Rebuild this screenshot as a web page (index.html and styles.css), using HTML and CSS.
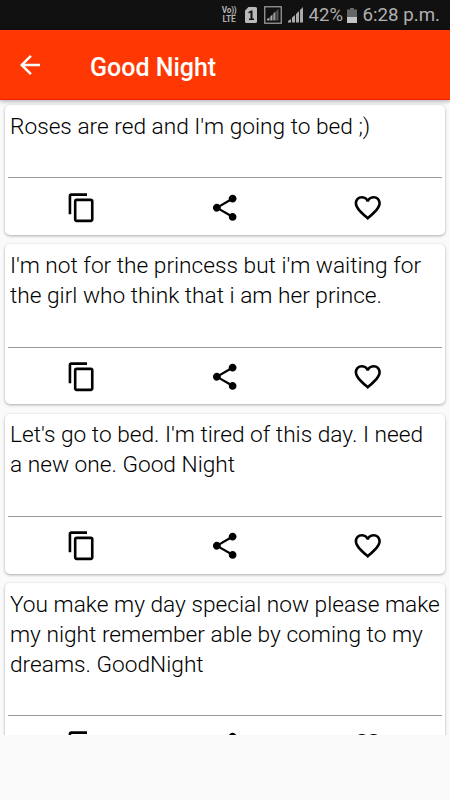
FILE: index.html
```
<!DOCTYPE html>
<html lang="en">
<head>
<meta charset="utf-8">
<title>Good Night</title>
<link rel="stylesheet" href="styles.css">
</head>
<body>
<svg class="defs" aria-hidden="true">
  <symbol id="copy" viewBox="0 0 24 24"><path d="M16 1H4c-1.1 0-2 .9-2 2v14h2V3h12V1zm3 4H8c-1.1 0-2 .9-2 2v14c0 1.1.9 2 2 2h11c1.1 0 2-.9 2-2V7c0-1.100-.9-2-2-2zm0 16H8V7h11v14z"/></symbol>
  <symbol id="share" viewBox="0 0 24 24"><path d="M18 16.080c-.76 0-1.440.3-1.960.77L8.910 12.700c.05-.23.09-.46.09-.7s-.04-.47-.09-.7l7.050-4.110c.54.5 1.250.81 2.040.81 1.660 0 3-1.340 3-3s-1.340-3-3-3-3 1.340-3 3c0 .24.04.47.09.7L8.040 9.810C7.500 9.310 6.790 9 6 9c-1.660 0-3 1.340-3 3s1.340 3 3 3c.79 0 1.500-.31 2.040-.81l7.120 4.160c-.05.21-.08.43-.08.65 0 1.610 1.310 2.920 2.920 2.920s2.920-1.310 2.920-2.920-1.310-2.920-2.920-2.920z"/></symbol>
  <symbol id="heart" viewBox="0 0 24 24"><path d="M16.500 3c-1.740 0-3.410.81-4.500 2.090C10.910 3.810 9.240 3 7.500 3 4.420 3 2 5.420 2 8.500c0 3.780 3.400 6.860 8.550 11.540L12 21.350l1.450-1.320C18.600 15.360 22 12.280 22 8.500 22 5.420 19.580 3 16.500 3zm-4.400 15.550l-.1.100-.1-.1C7.140 14.240 4 11.390 4 8.500 4 6.500 5.500 5 7.500 5c1.540 0 3.040.99 3.570 2.360h1.870C13.460 5.990 14.960 5 16.500 5c2 0 3.500 1.500 3.500 3.500 0 2.890-3.140 5.740-7.900 10.050z"/></symbol>
</svg>
<div class="status">
  <span class="volte"><span class="vo">Vo))</span><span>LTE</span></span>
  <svg class="sim" viewBox="0 0 12 16"><path d="M3.500 0H10.500Q12 0 12 1.500V14.500Q12 16 10.500 16H1.500Q0 16 0 14.500V3.500z" fill="#b9b9b9"/><path d="M3.500 5L6 3.500H7.500V11.500H9V13H4V11.500H5.500V5.500L3.500 6.500z" fill="#111"/></svg>
  <svg class="boxed" viewBox="0 0 18 18"><rect x=".75" y=".75" width="16.500" height="16.500" fill="none" stroke="#999" stroke-width="1.300"/><path d="M3 14.500V13L5.500 11.500V14.500zM6.300 14.500V10.500L8.500 8.500V14.500z" fill="#aaa"/><path d="M9.300 14.500V7.500L11.500 5.500V14.500z" fill="#999"/><path d="M12.300 14.500V5L14.500 3V14.500z" fill="#555"/></svg>
  <svg class="bars" viewBox="0 0 15 16"><path d="M0 15.500V14L3 12V15.500zM4 15.500V10.500L7 8V15.500zM8 15.500V7L11 4V15.500zM12 15.500V3L15 0V15.500z" fill="#aaa"/></svg>
  <span class="percent">42%</span>
  <svg class="battery" viewBox="0 0 10 15"><path d="M3 0H7V1.500H10V9H0V1.500H3z" fill="#666"/><path d="M0 9H10V15H0z" fill="#c4c4c4"/></svg>
  <span class="time">6:28 p.m.</span>
</div>
<header class="bar">
  <svg class="back" viewBox="0 0 24 24"><path d="M20 11H7.830l5.590-5.590L12 4l-8 8 8 8 1.410-1.410L7.830 13H20v-2z"/></svg>
  <h1>Good Night</h1>
</header>
<main class="list">
  <article class="card">
    <p>Roses are red and I'm going to bed ;)</p>
    <div class="actions"><svg><use href="#copy"/></svg><svg><use href="#share"/></svg><svg><use href="#heart"/></svg></div>
  </article>
  <article class="card">
    <p>I'm not for the princess but i'm waiting for<br>the girl who think that i am her prince.</p>
    <div class="actions"><svg><use href="#copy"/></svg><svg><use href="#share"/></svg><svg><use href="#heart"/></svg></div>
  </article>
  <article class="card">
    <p>Let's go to bed. I'm tired of this day. I need<br>a new one. Good Night</p>
    <div class="actions"><svg><use href="#copy"/></svg><svg><use href="#share"/></svg><svg><use href="#heart"/></svg></div>
  </article>
  <article class="card">
    <p>You make my day special now please make<br>my night remember able by coming to my<br>dreams. GoodNight</p>
    <div class="actions"><svg><use href="#copy"/></svg><svg><use href="#share"/></svg><svg><use href="#heart"/></svg></div>
  </article>
</main>
</body>
</html>
```
FILE: styles.css
```
* { box-sizing: border-box; }
body {
  margin: 0;
  height: 800px;
  overflow: hidden;
  background: #fafafa;
  font-family: Roboto, "Liberation Sans", sans-serif;
  color: #000;
}
.defs { display: none; }
svg { display: block; flex: none; }
.status {
  height: 30px;
  background: #111;
  color: #b0b0b0;
  display: flex;
  align-items: center;
  justify-content: flex-end;
  padding-right: 10px;
}
.volte {
  display: flex;
  flex-direction: column;
  align-items: center;
  width: 15px;
  margin-right: 8px;
  font-size: 8.3px;
  line-height: 9px;
  font-weight: 700;
}
.vo { letter-spacing: -.3px; }
.sim { width: 12px; height: 16px; margin-right: 7.5px; }
.boxed { width: 18px; height: 18px; margin-right: 5.5px; }
.bars { width: 15px; height: 16px; margin-right: 6px; }
.percent, .time { font-size: 18.7px; line-height: 30px; white-space: nowrap; }
.percent { width: 35px; font-size: 18.5px; }
.battery { width: 10px; height: 15px; margin: 0 6px 0 3px; }
.bar {
  position: relative;
  z-index: 1;
  height: 70px;
  background: #ff3803;
  border-bottom: 1px solid #f51c00;
  box-shadow: 0 2px 4px rgba(0, 0, 0, .25);
  display: flex;
  align-items: center;
  padding: 2px 0 0 15px;
}
.back { width: 30px; height: 30px; fill: #fff; margin: -2px 45px 0 0; }
h1 { margin: 4px 0 0; color: #fff; font-size: 25px; line-height: 30px; font-weight: 500; white-space: nowrap; }
.list {
  height: 635px;
  overflow: hidden;
  padding: 5px 5px 0;
  display: flex;
  flex-direction: column;
  gap: 9.3px;
}
.card {
  flex: none;
  background: #fff;
  border-radius: 5px;
  box-shadow: 0 1px 3px rgba(0, 0, 0, .32);
  padding: 6.6px 3px 0;
}
.card p {
  margin: 0;
  padding: 0 2px 35.7px;
  font-size: 22.7px;
  line-height: 30px;
  font-weight: 300;
  white-space: nowrap;
}
.actions {
  height: 57.8px;
  border-top: 1px solid #999;
  padding: 1.5px 3px 0 2px;
  display: grid;
  grid-template-columns: repeat(3, 1fr);
  place-items: center;
}
.actions svg { width: 31.5px; height: 31.5px; }
```
